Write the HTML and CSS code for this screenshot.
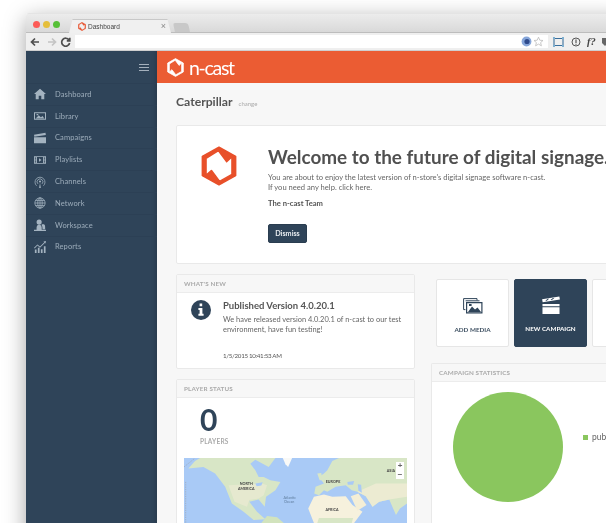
FILE: index.html
```html
<!DOCTYPE html>
<html lang="en">
<head>
<meta charset="utf-8">
<title>Dashboard</title>
<link rel="stylesheet" href="styles.css">
</head>
<body>
<svg width="0" height="0" class="defs" aria-hidden="true">
  <symbol id="logo" viewBox="0 0 36 40">
    <path fill-rule="evenodd" stroke-width="1.6" stroke-linejoin="round" d="M18 1.2 34.6 10.5V29.5L18 38.8 1.4 29.5V10.5ZM5 12.4V29.4L10.4 24.6 18.6 35.4 31 28.4V10.6L25.6 15.6 17.4 4.6Z"/>
  </symbol>
</svg>
<div class="window">
  <div class="tabstrip">
    <div class="lights"><i class="light red"></i><i class="light yellow"></i><i class="light green"></i></div>
    <div class="tab">
      <svg class="favicon"><use href="#logo"/></svg>
      <span class="tab-title">Dashboard</span>
      <span class="tab-close">×</span>
    </div>
    <div class="newtab"></div>
  </div>
  <div class="toolbar">
    <svg class="nav-icons" width="42" height="12" viewBox="0 0 42 12">
      <path d="M9 6H2M5 2.5 1.5 6 5 9.5" class="nav-back"/>
      <path d="M18 6H25M22 2.5 25.5 6 22 9.5" class="nav-fwd"/>
      <path d="M39 4A4 4 0 1 0 39.6 7M39.8 1.8V4.8H36.8" class="nav-back"/>
    </svg>
    <div class="omnibox">
      <svg class="omni-icons" width="27" height="11" viewBox="0 0 27 11">
        <circle cx="5.5" cy="5.5" r="4.9" fill="#86a6da"/>
        <circle cx="6" cy="5.5" r="2.6" fill="#2e4a8c"/>
        <path d="M17.5 1.2 18.8 4.2 22 4.5 19.6 6.6 20.4 9.8 17.5 8.1 14.6 9.8 15.4 6.6 13 4.5 16.2 4.2Z" fill="#fff" stroke="#bbb" stroke-width=".8"/>
      </svg>
    </div>
    <div class="exts">
      <svg width="11" height="10" viewBox="0 0 11 10"><path d="M1 1.5H10V8.5H1Z" fill="none" stroke="#3a6f9c" stroke-width="1.1"/><path d="M0 0H2V2H0ZM9 0H11V2H9ZM0 8H2V10H0ZM9 8H11V10H9Z" fill="#7fb0d0"/></svg>
      <svg width="10" height="10" viewBox="0 0 10 10"><circle cx="5" cy="5" r="4" fill="none" stroke="#555" stroke-width="1"/><path d="M5 2.6V6M5 6.8V7.8" stroke="#555" stroke-width="1.2"/></svg>
      <span class="ext-f">f?</span>
      <svg width="6" height="10" viewBox="0 0 6 10"><path d="M0 1H6V6L3 9 0 6Z" fill="#666"/></svg>
    </div>
  </div>
  <div class="app">
    <aside class="sidebar">
      <div class="side-head"><span class="burger"></span></div>
      <nav class="side-nav">
        <a class="nav-item"><svg class="nav-icon" viewBox="0 0 14 12"><path d="M7 0 14 6H12V12H8.5V8H5.5V12H2V6H0Z"/></svg>Dashboard</a>
        <a class="nav-item"><svg class="nav-icon" viewBox="0 0 14 12"><path fill-rule="evenodd" d="M0 1.5H14V10.5H0ZM1.2 2.7V9.3H12.8V2.7Z"/><path d="M2 9 5.5 5 8 7.5 10 6 12 9ZM3 3.6H5V5.2H3Z"/></svg>Library</a>
        <a class="nav-item"><svg class="nav-icon" viewBox="0 0 14 12"><path d="M0 5H14V12H0ZM0 2.2 13.4 0 13.8 2.4 .4 4.4Z"/></svg>Campaigns</a>
        <a class="nav-item"><svg class="nav-icon" viewBox="0 0 14 12"><path fill-rule="evenodd" d="M0 1.5H14V10.5H0ZM3.5 2.5V9.5H10.5V2.5ZM1 3V4.4H2.5V3ZM1 5.3V6.7H2.5V5.3ZM1 7.6V9H2.5V7.6ZM11.5 3V4.4H13V3ZM11.5 5.3V6.7H13V5.3ZM11.5 7.6V9H13V7.6Z"/><path d="M5.8 4 8.8 6 5.8 8Z"/></svg>Playlists</a>
        <a class="nav-item"><svg class="nav-icon stroke" viewBox="0 0 14 14"><path d="M3 11.4A5.8 5.8 0 1 1 11 11.4M4.6 9.2A3.4 3.4 0 1 1 9.4 9.2"/><circle cx="7" cy="6.4" r="1.2" class="fillme"/><path d="M6 14 7 8 8 14Z" class="fillme"/></svg>Channels</a>
        <a class="nav-item"><svg class="nav-icon stroke" viewBox="0 0 14 14"><circle cx="7" cy="7" r="6"/><ellipse cx="7" cy="7" rx="2.6" ry="6"/><path d="M1 7H13M1.8 4H12.2M1.8 10H12.2M7 1V13"/></svg>Network</a>
        <a class="nav-item"><svg class="nav-icon" viewBox="0 0 14 14"><circle cx="6" cy="3.6" r="3"/><path d="M3 14V10Q3 7 5 6.6H7Q9 7 9 10V14ZM9.5 6H11.5Q13 6.4 13 9V12H10Q10 8 8.8 6.6ZM0 12.6H14V14H0Z"/></svg>Workspace</a>
        <a class="nav-item"><svg class="nav-icon" viewBox="0 0 14 14"><path d="M1 10H3V14H1ZM4.5 8H6.5V14H4.5ZM8 9.5H10V14H8ZM11.5 6H13.5V14H11.5Z"/><path d="M0 8 4 4 7 6.5 12 1.5 11 .7 14 0 13.4 3 12.6 2.2 7 7.8 4 5.3.8 8.8Z"/></svg>Reports</a>
      </nav>
    </aside>
    <div class="main">
      <header class="topbar">
        <svg class="brand-mark"><use href="#logo"/></svg>
        <span class="brand-name">n-cast</span>
      </header>
      <section class="body">
        <div class="page-title"><h1>Caterpillar</h1><small>change</small></div>
        <div class="card welcome">
          <svg class="welcome-mark"><use href="#logo"/></svg>
          <div class="welcome-text">
            <h2>Welcome to the future of digital signage.</h2>
            <p>You are about to enjoy the latest version of n-store's digital signage software n-cast.<br>If you need any help. click here.</p>
            <p class="team">The n-cast Team</p>
            <button class="dismiss">Dismiss</button>
          </div>
        </div>
        <div class="columns">
          <div class="col-left">
            <div class="card panel news">
              <div class="panel-head">WHAT'S NEW</div>
              <div class="news-body">
                <svg class="info" viewBox="0 0 20 20"><circle cx="10" cy="10" r="10" fill="#2f4459"/><path d="M8.6 3.6H11.2V6.2H8.6ZM7.4 8H11.4V13.8H12.6V15.8H7.4V13.8H8.6V10H7.4Z" fill="#fff"/></svg>
                <div class="news-text">
                  <h3>Published Version 4.0.20.1</h3>
                  <p>We have released version 4.0.20.1 of n-cast to our test environment, have fun testing!</p>
                  <time>1/5/2015 10:41:53 AM</time>
                </div>
              </div>
            </div>
            <div class="card panel status">
              <div class="panel-head">PLAYER STATUS</div>
              <div class="status-count"><strong>0</strong><span>PLAYERS</span></div>
              <div class="map">
                <svg class="map-art" viewBox="27 53 666 196" preserveAspectRatio="none">
                  <rect x="27" y="53" width="666" height="196" fill="#a9caf6"/>
                  <g class="map-land">
                    <path fill="#d8e6c6" d="M75 53 60 62 40 85 85 80 120 100 150 140 170 190 205 215 235 240 270 238 245 215 222 185 250 178 268 200 272 170 300 150 315 125 285 120 265 110 250 110 240 90 225 70 240 58 280 80 300 53Z"/>
                    <path fill="#e6e9cf" d="M160 135 260 130 275 135 265 165 250 175 222 180 215 200 178 185Z"/>
                    <path fill="#f9f9f7" d="M322 53 350 53 338 80 330 72Z"/>
                    <path fill="#d2e3bd" d="M258 249 275 228 305 232 325 249Z"/>
                    <path fill="#d8e6c6" d="M455 90 470 62 490 53H693V190L672 205 660 225 640 178 610 185 590 200 570 168 545 155 528 150 510 135 480 140 455 155 445 150 430 165 416 160 420 140 445 130 430 110 445 100Z"/>
                    <path fill="#ecebd2" d="M545 155 600 130 693 130V170L640 178 610 185 590 200 570 168Z"/>
                    <path fill="#a9caf6" d="M515 125 535 122 532 134 516 134ZM546 132 556 134 558 158 548 152ZM240 130 262 126 258 136 244 138Z"/>
                    <path fill="#f6f1dd" d="M398 205 415 170 445 163 470 170 510 168 530 195 560 215 535 249H415Z"/>
                    <path fill="#f4eed6" d="M525 168 548 160 572 195 545 212Z"/>
                    <path fill="#d8e6c6" d="M430 234H532L528 249H425ZM432 120 425 100 437 98 440 120Z"/>
                  </g>
                  <path class="map-edge" d="M27 80 58 55M32 125V249"/>
                  <text x="213" y="135" class="map-label">NORTH</text>
                  <text x="213" y="149" class="map-label">AMERICA</text>
                  <text x="472" y="129" class="map-label">EUROPE</text>
                  <text x="469" y="212" class="map-label">AFRICA</text>
                  <text x="343" y="176" class="map-sea">Atlantic</text>
                  <text x="341" y="188" class="map-sea">Ocean</text>
                  <text x="645" y="94" class="map-label">ASIA</text>
                </svg>
                <div class="zoom-ctl"><span>+</span><span>−</span></div>
              </div>
            </div>
          </div>
          <div class="col-right">
            <div class="tiles">
              <div class="tile">
                <svg class="tile-icon" width="20" height="16" viewBox="0 0 20 16"><path d="M.6.6H14V2.4M.6.6V11.6H2.4" fill="none" stroke="#2f4459" stroke-width="1"/><path d="M2.6 2.8H16.5" fill="none" stroke="#2f4459" stroke-width="1"/><path fill-rule="evenodd" fill="#2f4459" d="M3 4H19.5V15.5H3ZM4.2 5.2V14.3H18.3V5.2Z"/><path fill="#2f4459" d="M5 14 9 8.5 12 11.5 14.5 9.5 18 14ZM6 6H8.6V8H6Z"/></svg>
                <span>ADD MEDIA</span>
              </div>
              <div class="tile active">
                <svg class="tile-icon" width="20" height="19" viewBox="0 0 20 19"><path fill="#fff" d="M1 8.5H19V19H1ZM1 10.7V12H19V10.7ZM.6 3.4 18.8.4 19.4 3.8 1.2 6.6Z"/><path fill="#2f4459" d="M4 5 6.5 2.8H8L5.6 5ZM9.5 4.2 12 2H13.5L11 4.2Z"/></svg>
                <span>NEW CAMPAIGN</span>
              </div>
              <div class="tile"></div>
            </div>
            <div class="card panel stats">
              <div class="panel-head">CAMPAIGN STATISTICS</div>
              <div class="stats-body">
                <div class="pie"></div>
                <div class="legend"><i></i><span>published</span></div>
              </div>
            </div>
          </div>
        </div>
      </section>
    </div>
  </div>
</div>
</body>
</html>
```
FILE: styles.css
```css
* { box-sizing: border-box; }
html, body { margin: 0; height: 100%; }
body {
  width: 606px;
  height: 523px;
  overflow: hidden;
  background: #fff;
  padding: 13px 0 0 26px;
  font-family: Lato, "Open Sans", sans-serif;
  color: #555;
}
.defs { position: absolute; }
.window {
  width: 600px;
  height: 530px;
  display: flex;
  flex-direction: column;
  border-radius: 3px 3px 0 0;
  box-shadow: 0 6px 22px rgba(0, 0, 0, .36);
  filter: blur(.3px);
  overflow: hidden;
}
.tabstrip {
  flex: 0 0 20px;
  display: flex;
  align-items: flex-end;
  background: linear-gradient(#ececec, #d9d9d9);
  border-top: 1px solid #e4e4e4;
  border-bottom: 1px solid #bdbdbd;
  padding-left: 7px;
}
.lights { display: flex; gap: 3px; align-self: flex-start; margin: 6.5px 0 0 0; }
.light { width: 7px; height: 7px; border-radius: 50%; display: block; }
.red { background: #fc5b57; }
.yellow { background: #e5bf3c; }
.green { background: #57c038; }
.tab {
  margin-left: 9px;
  margin-bottom: -1px;
  width: 102px;
  height: 14px;
  padding: 0 4px 0 9px;
  display: flex;
  align-items: center;
  background: #f0f0f0;
  border-top: 1px solid #c8c8c8;
  clip-path: polygon(0 100%, 3.5% 0, 96.5% 0, 100% 100%);
}
.favicon { width: 8px; height: 9px; fill: #e8502a; stroke: #e8502a; flex: none; margin-right: 2px; }
.tab-title { font: 6.5px "Liberation Sans", sans-serif; color: #444; flex: 1; }
.tab-close { font: 9px/1 "Liberation Sans", sans-serif; color: #888; margin-right: 1px; }
.newtab {
  width: 15px;
  height: 9px;
  margin: 0 0 0 3px;
  background: #c8c8c8;
  border-radius: 2px 3px 0 0;
  transform: skewX(12deg);
}
.toolbar {
  flex: 0 0 18px;
  display: flex;
  align-items: center;
  background: #efefef;
  border-bottom: 1px solid #cfcfcf;
  padding-left: 4px;
}
.nav-icons { flex: none; margin-right: 3px; }
.nav-back, .nav-fwd { fill: none; stroke-width: 1.7; }
.nav-back { stroke: #4f4f4f; }
.nav-fwd { stroke: #c4c4c4; }
.omnibox {
  width: 473px;
  height: 13px;
  background: #fff;
  display: flex;
  align-items: center;
  justify-content: flex-end;
  flex: none;
}
.omni-icons { margin-right: 0; }
.exts { display: flex; align-items: center; gap: 6.5px; padding-left: 5px; }
.ext-f { font: italic bold 10.5px "Liberation Serif", serif; color: #444; }
.app { flex: 1; display: flex; min-height: 0; }
.sidebar {
  flex: 0 0 131px;
  background: #2f4459;
  box-shadow: inset -5px 0 5px -4px rgba(0, 0, 0, .18);
}
.side-head {
  height: 32px;
  display: flex;
  align-items: center;
  justify-content: flex-end;
  padding-right: 8px;
}
.burger {
  width: 10px;
  height: 7px;
  border-top: 1px solid #a4b0bc;
  border-bottom: 1px solid #a4b0bc;
  position: relative;
}
.burger::after {
  content: "";
  position: absolute;
  left: 0;
  right: 0;
  top: 2px;
  height: 1px;
  background: #a4b0bc;
}
.side-nav { display: flex; flex-direction: column; }
.nav-item {
  height: 21.8px;
  display: flex;
  align-items: center;
  gap: 9px;
  padding-left: 8px;
  font-size: 7.5px;
  color: #9dadbb;
  letter-spacing: .1px;
  border-top: 1px solid #2c4055;
}
.nav-icon { width: 12px; height: 12px; fill: #a4b3c0; flex: none; }
.nav-icon.stroke { fill: none; stroke: #a4b3c0; stroke-width: .9; }
.nav-icon .fillme { fill: #a4b3c0; stroke: none; }
.main { flex: 1; display: flex; flex-direction: column; min-width: 0; background: #f7f7f7; }
.topbar {
  flex: 0 0 32px;
  background: #eb5c33;
  display: flex;
  align-items: center;
  padding-left: 10px;
  gap: 5px;
}
.brand-mark { width: 17px; height: 19px; fill: #fff; stroke: #fff; }
.brand-name { font-size: 19.5px; font-weight: 400; color: #fff; letter-spacing: -1.3px; }
.body { padding: 0 0 0 19px; width: 480px; overflow: hidden; flex: 1; }
.page-title { height: 42px; display: flex; align-items: baseline; padding-top: 11px; gap: 6px; }
.page-title h1 { margin: 0; font-size: 12.2px; font-weight: 700; color: #555; }
.page-title small { font-size: 6px; color: #aaa; }
.card { background: #fff; border: 1px solid #e9e9e9; border-radius: 2px; }
.welcome {
  width: 440px;
  height: 139px;
  display: flex;
  padding: 20px 0 0 24px;
}
.welcome-mark { width: 36px; height: 40px; fill: #e8502a; stroke: #e8502a; flex: none; margin-right: 31px; }
.welcome-text { flex: none; width: 345px; }
.welcome-text h2 { margin: 0 0 5px; font-size: 18.9px; line-height: 21px; font-weight: 700; color: #505050; white-space: nowrap; }
.welcome-text p { margin: 0; font-size: 7.6px; line-height: 10px; color: #666; white-space: nowrap; }
.welcome-text .team { margin-top: 6px; font-weight: 700; color: #555; }
.dismiss {
  margin-top: 16px;
  display: block;
  width: 39px;
  height: 19px;
  padding: 0;
  border: 1px solid #2a3d50;
  border-radius: 2px;
  background: #2f4459;
  color: #e9edf0;
  font: 700 7.2px Lato, sans-serif;
}
.columns { display: flex; margin-top: 10px; gap: 16px; }
.col-left { flex: 0 0 239px; display: flex; flex-direction: column; gap: 10px; }
.col-right { flex: 0 0 200px; }
.panel-head {
  height: 18px;
  background: #f7f7f7;
  border-bottom: 1px solid #ececec;
  font-size: 6.3px;
  font-weight: 700;
  color: #aaa;
  display: flex;
  align-items: center;
  padding-left: 7px;
  letter-spacing: .15px;
}
.news { height: 95px; }
.news-body { display: flex; padding: 7px 0 0 14px; }
.info { width: 20px; height: 20px; flex: none; margin: 0 12px 0 0; }
.news-text h3 { margin: 0; font-size: 9.5px; line-height: 12px; font-weight: 700; color: #555; }
.news-text p { margin: 3px 0 0; font-size: 7.45px; line-height: 10px; color: #666; width: 184px; }
.news-text time { display: block; margin-top: 17px; font-size: 6.2px; line-height: 8px; color: #555; letter-spacing: -.3px; }
.status { height: 160px; }
.status-count { height: 60px; padding-left: 23px; display: flex; flex-direction: column; }
.status-count strong { font-size: 30px; line-height: 36px; color: #2f4459; font-weight: 700; height: 39px; padding-top: 3px; box-sizing: border-box; }
.status-count span { font-size: 6.5px; font-weight: 700; color: #aaa; margin-top: 1px; letter-spacing: .2px; }
.map { position: relative; margin-left: 7px; width: 223px; height: 70px; overflow: hidden; }
.map-art { display: block; width: 223px; height: 65px; }
.map-land { filter: blur(2px); }
.map-edge { fill: none; stroke: #9a9a9a; stroke-width: 1.5; stroke-dasharray: 4 3; }
.map-label { font: 700 11px Lato, sans-serif; fill: #444; text-anchor: middle; }
.map-sea { font: 11px Lato, sans-serif; fill: #5f7d9e; text-anchor: middle; }
.zoom-ctl {
  position: absolute;
  top: 4px;
  right: 3px;
  width: 8px;
  display: flex;
  flex-direction: column;
  background: #fff;
  font: 700 8px/8.5px "Liberation Sans", sans-serif;
  color: #666;
  text-align: center;
}
.tiles { display: flex; gap: 5px; margin: 5px 0 16px 5px; width: 240px; }
.tile {
  flex: 0 0 73px;
  height: 68px;
  background: #fff;
  border: 1px solid #e6e6e6;
  border-radius: 2px;
  display: flex;
  flex-direction: column;
  align-items: center;
  padding-top: 17px;
  font-size: 6.3px;
  font-weight: 700;
  color: #3d4f61;
}
.tile-icon { height: 18px; margin-bottom: 11px; }
.tile.active { background: #2f4459; border-color: #2f4459; color: #fff; padding-top: 16px; }
.stats { width: 240px; height: 200px; border-right: 0; }
.stats .panel-head { padding-left: 7px; }
.stats-body { display: flex; align-items: flex-start; padding: 10px 0 0 21px; }
.pie { width: 110px; height: 110px; border-radius: 50%; background: #8ac65e; flex: none; }
.legend { display: flex; align-items: center; gap: 4px; margin: 40px 0 0 20px; font-size: 8.5px; color: #666; white-space: nowrap; }
.legend i { width: 5px; height: 5px; background: #8ac65e; display: block; }
```
